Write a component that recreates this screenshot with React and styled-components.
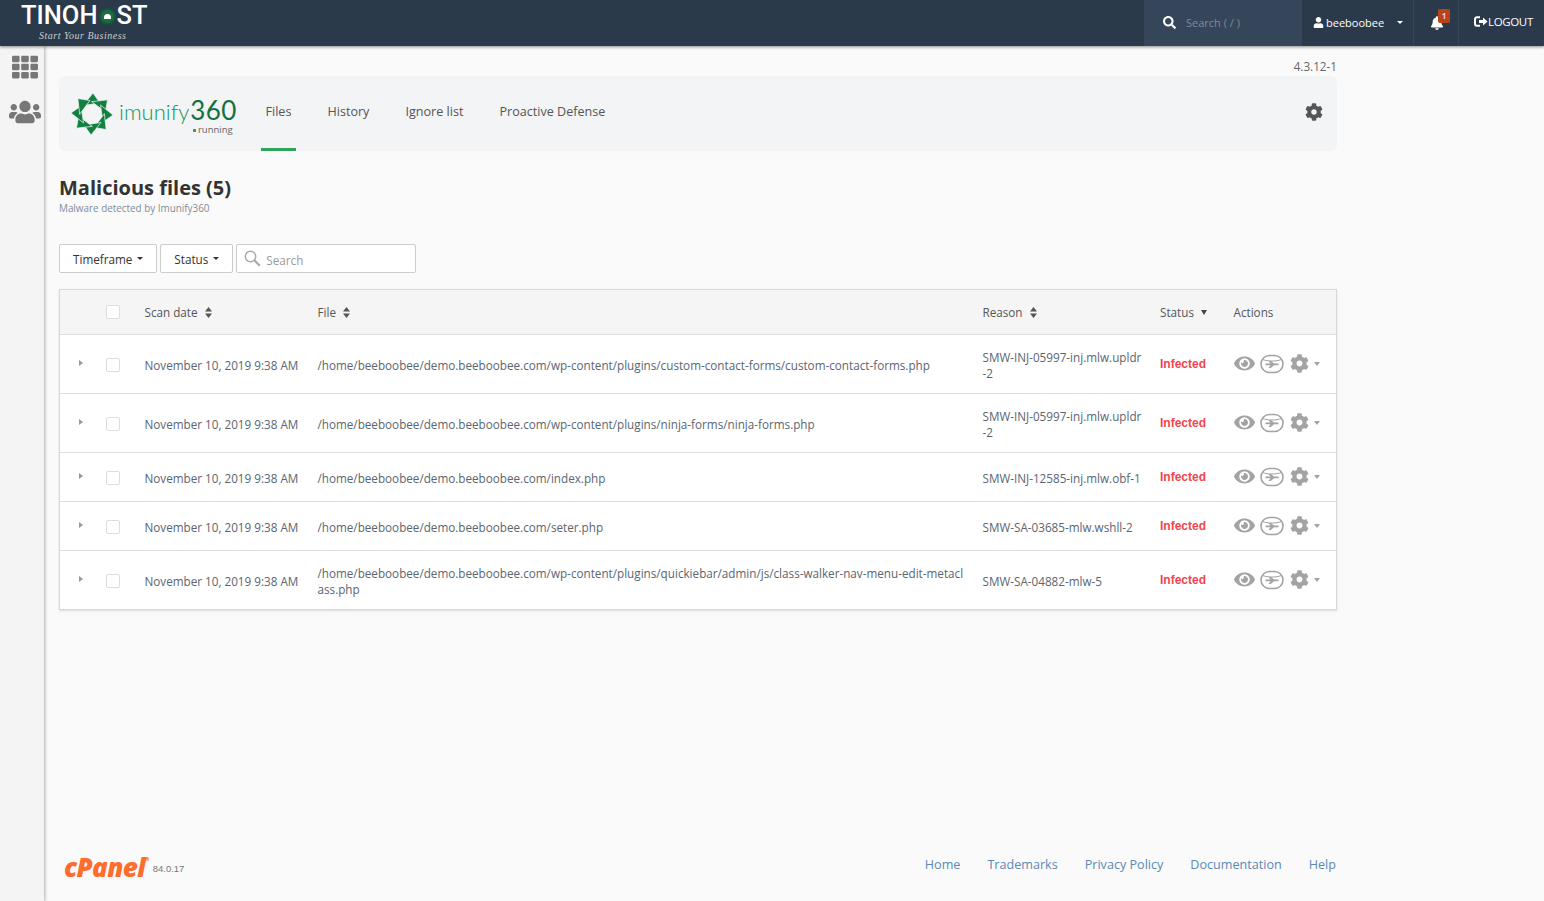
import styled, { createGlobalStyle } from "styled-components";
import { FaBell, FaCog, FaEye, FaSearch, FaTh, FaUser, FaUsers } from "react-icons/fa";

const rows = [
  {
    tall: true,
    file: "/home/beeboobee/demo.beeboobee.com/wp-content/plugins/custom-contact-forms/custom-contact-forms.php",
    reason: "SMW-INJ-05997-inj.mlw.upldr-2",
  },
  {
    tall: true,
    file: "/home/beeboobee/demo.beeboobee.com/wp-content/plugins/ninja-forms/ninja-forms.php",
    reason: "SMW-INJ-05997-inj.mlw.upldr-2",
  },
  {
    file: "/home/beeboobee/demo.beeboobee.com/index.php",
    reason: "SMW-INJ-12585-inj.mlw.obf-1",
  },
  {
    file: "/home/beeboobee/demo.beeboobee.com/seter.php",
    reason: "SMW-SA-03685-mlw.wshll-2",
  },
  {
    tall: true,
    file: "/home/beeboobee/demo.beeboobee.com/wp-content/plugins/quickiebar/admin/js/class-walker-nav-menu-edit-metaclass.php",
    reason: "SMW-SA-04882-mlw-5",
  },
];

const Global = createGlobalStyle`
  html, body { margin: 0; padding: 0; }
  body {
    background: #fafafa;
    font-family: "Open Sans", "Liberation Sans", sans-serif;
    color: #555;
  }
`;

function ImunifyMark() {
  const blades = [0, 45, 90, 135, 180, 225, 270, 315];
  return (
    <svg width="42" height="42" viewBox="-21 -21 42 42">
      {blades.map((a) => (
        <path
          key={a}
          transform={`rotate(${a})`}
          d="M1 -21 L-9 -8.5 L8 -11 Z"
          fill="#12813f"
          stroke="#f3f4f6"
          strokeWidth="0.7"
        />
      ))}
    </svg>
  );
}

function ProactiveIcon() {
  return (
    <svg width="24" height="20" viewBox="0 0 24 20">
      <rect x="1" y="1.5" width="22" height="17" rx="8.5" fill="none" stroke="#a3a3a3" strokeWidth="1.6" />
      <path d="M2.5 5.5 C8 7.5 16 7.5 21.5 5.5" fill="none" stroke="#a3a3a3" strokeWidth="1" />
      <path d="M5.5 9.4 H10.5 L8.5 7 H10.8 L14 9.4 H18.5 V11.2 H14 L10.8 14 H8.5 L10.5 11.2 H5.5 Z" fill="#a3a3a3" />
    </svg>
  );
}

function LogoutIcon() {
  return (
    <svg width="14" height="11" viewBox="0 0 14 11">
      <path d="M6 1.2 H3 A2 2 0 0 0 1 3.2 V7.8 A2 2 0 0 0 3 9.8 H6" fill="none" stroke="#fff" strokeWidth="2" />
      <path d="M5 4 H9 V1.6 L13.6 5.5 L9 9.4 V7 H5 Z" fill="#fff" />
    </svg>
  );
}

function SortArrows() {
  return (
    <svg width="7" height="11" viewBox="0 0 7 11">
      <path d="M3.5 0 L7 4.4 H0 Z M3.5 11 L0 6.6 H7 Z" fill="#555" />
    </svg>
  );
}

function ThinSearch() {
  return (
    <svg width="17" height="17" viewBox="0 0 17 17">
      <circle cx="6.5" cy="6.5" r="5.2" fill="none" stroke="#a9a9a9" strokeWidth="1.5" />
      <path d="M10.3 10.3 L15.8 15.8" stroke="#a9a9a9" strokeWidth="2.2" />
    </svg>
  );
}

export default function App() {
  return (
    <Page>
      <Global />
      <TopBar>
        <Brand>
          <BrandName>
            TINOH<BrandDot><i /></BrandDot>ST
          </BrandName>
          <BrandTag>Start Your Business</BrandTag>
        </Brand>
        <TopActions>
          <TopSearch>
            <FaSearch size={13} color="#fff" />
            <span>Search ( / )</span>
          </TopSearch>
          <UserCell>
            <FaUser size={11} />
            <span>beeboobee</span>
            <Caret $color="#fff" />
          </UserCell>
          <BellCell>
            <FaBell size={14} />
            <Badge>1</Badge>
          </BellCell>
          <LogoutCell>
            <LogoutIcon />
            <span>LOGOUT</span>
          </LogoutCell>
        </TopActions>
      </TopBar>
      <Body>
        <Side>
          <FaTh size={26} color="#777" />
          <FaUsers size={32} color="#777" />
        </Side>
        <Main>
          <Version>4.3.12-1</Version>
          <NavPanel>
            <Logo>
              <ImunifyMark />
              <LogoText>
                <LogoWord>
                  imunify<b>360</b>
                </LogoWord>
                <LogoState><i />running</LogoState>
              </LogoText>
            </Logo>
            <Tabs>
              <Tab $active>Files</Tab>
              <Tab>History</Tab>
              <Tab>Ignore list</Tab>
              <Tab>Proactive Defense</Tab>
            </Tabs>
            <SettingsGear><FaCog size={18} /></SettingsGear>
          </NavPanel>
          <Title>Malicious files (5)</Title>
          <Subtitle>Malware detected by Imunify360</Subtitle>
          <Filters>
            <FilterButton>Timeframe<Caret $color="#333" /></FilterButton>
            <FilterButton>Status<Caret $color="#333" /></FilterButton>
            <SearchBox>
              <ThinSearch />
              <span>Search</span>
            </SearchBox>
          </Filters>
          <Table>
            <HeadRow>
              <span />
              <CheckCell><Check /></CheckCell>
              <HeadCell>Scan date <SortArrows /></HeadCell>
              <HeadCell>File <SortArrows /></HeadCell>
              <HeadCell>Reason <SortArrows /></HeadCell>
              <HeadCell>Status <DownTri /></HeadCell>
              <HeadCell>Actions</HeadCell>
            </HeadRow>
            {rows.map((r) => (
              <Row key={r.file} $tall={r.tall}>
                <Expander><i /></Expander>
                <CheckCell><Check /></CheckCell>
                <Cell>November 10, 2019 9:38 AM</Cell>
                <FileCell>{r.file}</FileCell>
                <ReasonCell>{r.reason}</ReasonCell>
                <StatusCell>Infected</StatusCell>
                <ActionsCell>
                  <FaEye size={21} />
                  <ProactiveIcon />
                  <GearIcon><FaCog size={19} /></GearIcon>
                  <SmallCaret />
                </ActionsCell>
              </Row>
            ))}
          </Table>
          <Footer>
            <CpanelBlock>
              <CpanelLogo>cPanel<sup>®</sup></CpanelLogo>
              <CpanelVersion>84.0.17</CpanelVersion>
            </CpanelBlock>
            <FooterLinks>
              <a>Home</a>
              <a>Trademarks</a>
              <a>Privacy Policy</a>
              <a>Documentation</a>
              <a>Help</a>
            </FooterLinks>
          </Footer>
        </Main>
      </Body>
    </Page>
  );
}

const Page = styled.div`
  height: 901px;
  display: flex;
  flex-direction: column;
  overflow: hidden;
`;

const TopBar = styled.header`
  height: 46px;
  flex: none;
  background: #2b3a4a;
  box-shadow: 0 1px 3px rgba(0, 0, 0, 0.45);
  display: flex;
  justify-content: space-between;
  position: relative;
  z-index: 2;
`;

const Brand = styled.div`
  padding: 1px 0 0 21px;
  color: #fff;
`;

const BrandName = styled.div`
  display: flex;
  align-items: center;
  height: 29px;
  font: 500 25.5px/29px "Roboto", "Liberation Sans", sans-serif;
`;

const BrandDot = styled.span`
  width: 13px;
  height: 13px;
  margin: 1px 1px 0;
  border-radius: 50%;
  background: #1e6b45;
  border: 2px solid #17563a;
  display: flex;
  align-items: center;
  justify-content: center;

  i {
    width: 7px;
    height: 5px;
    border-radius: 4px 4px 0 0;
    background: #fff;
  }
`;

const BrandTag = styled.div`
  margin: 0 0 0 18px;
  font: italic 400 10px/11px "Liberation Serif", serif;
  color: #c7ccd1;
  letter-spacing: 0.5px;
`;

const TopActions = styled.div`
  display: flex;
  color: #fff;
  font-size: 11px;
`;

const TopCell = styled.div`
  display: flex;
  align-items: center;
  height: 46px;
  box-sizing: border-box;
  border-left: 1px solid #36475a;
`;

const TopSearch = styled(TopCell)`
  width: 157px;
  padding: 0 0 2px 18px;
  gap: 10px;
  background: #35465a;

  span {
    color: #7f8a96;
    font-size: 11px;
  }
`;

const UserCell = styled(TopCell)`
  width: 112px;
  padding: 0 0 1px 11px;
  gap: 2px;

  span {
    margin-right: 6px;
  }
`;

const BellCell = styled(TopCell)`
  width: 45px;
  padding-left: 16px;
  position: relative;
`;

const Badge = styled.span`
  position: absolute;
  top: 9px;
  left: 24px;
  width: 12px;
  height: 14px;
  border-radius: 2px;
  background: #b8431b;
  color: #e8d3c8;
  font-size: 8px;
  font-weight: 700;
  line-height: 14px;
  text-align: center;
`;

const LogoutCell = styled(TopCell)`
  width: 86px;
  padding: 0 0 3px 15px;
  gap: 0;
  font-size: 11.5px;
  letter-spacing: -0.35px;
`;

const Caret = styled.i`
  display: inline-block;
  width: 0;
  height: 0;
  margin-left: 5px;
  border-top: 3px solid ${(p) => p.$color};
  border-left: 3px solid transparent;
  border-right: 3px solid transparent;
`;

const Body = styled.div`
  flex: 1;
  display: flex;
  min-height: 0;
`;

const Side = styled.nav`
  width: 44px;
  flex: none;
  box-sizing: border-box;
  background: #f4f4f4;
  box-shadow: 1px 0 3px rgba(0, 0, 0, 0.3);
  padding: 8px 0 0 6px;
  display: flex;
  flex-direction: column;
  align-items: center;
  gap: 16px;
  position: relative;
`;

const Main = styled.main`
  width: 1278px;
  margin-left: 15px;
  display: flex;
  flex-direction: column;
`;

const Version = styled.div`
  height: 30px;
  box-sizing: border-box;
  padding: 12px 0 0 0;
  text-align: right;
  font-size: 11.7px;
  line-height: 16px;
  color: #666;
`;

const NavPanel = styled.div`
  height: 75px;
  flex: none;
  background: #f3f4f6;
  border-radius: 6px;
  display: flex;
  align-items: stretch;
  padding: 0 14px 0 12px;
`;

const Logo = styled.div`
  width: 190px;
  display: flex;
  align-items: center;
  gap: 6px;
`;

const LogoText = styled.div`
  display: flex;
  flex-direction: column;
  align-items: flex-end;
  margin-top: 5px;
`;

const LogoWord = styled.div`
  display: flex;
  align-items: baseline;
  font: 300 22px/24px "Lato", "Open Sans", sans-serif;
  color: #0f9a52;

  b {
    font-weight: 400;
    color: #12713f;
    font-size: 26px;
    margin-left: 1px;
    letter-spacing: 0.4px;
  }
`;

const LogoState = styled.div`
  font-size: 9.5px;
  line-height: 11px;
  color: #666;
  padding-right: 4px;

  i {
    display: inline-block;
    width: 3px;
    height: 3px;
    margin: 0 2px 1px 0;
    background: #2ea35c;
  }
`;

const Tabs = styled.div`
  display: flex;
  flex: 1;
`;

const Tab = styled.div`
  margin-right: 27px;
  padding: 0 4.5px 2px;
  display: flex;
  align-items: center;
  height: 75px;
  box-sizing: border-box;
  font-size: 12.6px;
  color: #555;
  border-bottom: 3px solid ${(p) => (p.$active ? "#2ea35c" : "transparent")};
`;

const SettingsGear = styled.div`
  display: flex;
  align-items: center;
  color: #555;
  padding-bottom: 4px;
`;

const Title = styled.h1`
  margin: 25px 0 0;
  font-size: 20px;
  line-height: 24px;
  font-weight: 700;
  color: #333;
`;

const Subtitle = styled.div`
  margin-top: 2px;
  font-size: 9.9px;
  line-height: 13px;
  color: #7f8c99;
`;

const Filters = styled.div`
  margin-top: 29px;
  display: flex;
  gap: 3px;
`;

const FilterButton = styled.div`
  height: 29px;
  box-sizing: border-box;
  padding: 0 13px;
  display: flex;
  align-items: center;
  background: #fff;
  border: 1px solid #ccc;
  border-radius: 2px;
  font-size: 11.7px;
  color: #333;
`;

const SearchBox = styled.div`
  width: 180px;
  height: 29px;
  box-sizing: border-box;
  padding: 2px 0 0 7px;
  display: flex;
  align-items: center;
  gap: 5px;
  background: #fff;
  border: 1px solid #ccc;
  border-radius: 2px;
  font-size: 11.7px;
  color: #999;

  svg {
    margin-top: -2px;
  }
`;

const Table = styled.div`
  margin-top: 16px;
  background: #fff;
  border: 1px solid #d9d9d9;
  box-shadow: 0 1px 2px rgba(0, 0, 0, 0.12);
`;

const columns = "36px 48.5px 173px 665px 177.5px 73.5px 1fr";

const HeadRow = styled.div`
  height: 44px;
  display: grid;
  grid-template-columns: ${columns};
  align-items: center;
  background: #f5f5f5;
`;

const HeadCell = styled.div`
  display: flex;
  align-items: center;
  gap: 7px;
  font-size: 11.7px;
  color: #555;
`;

const DownTri = styled.i`
  width: 0;
  height: 0;
  border-top: 5px solid #444;
  border-left: 3px solid transparent;
  border-right: 3px solid transparent;
`;

const Row = styled.div`
  height: ${(p) => (p.$tall ? "58px" : "48px")};
  box-sizing: content-box;
  display: grid;
  grid-template-columns: ${columns};
  align-items: center;
  border-top: 1px solid #ddd;

  & > * {
    position: relative;
    top: 1px;
  }
`;

const Expander = styled.div`
  padding-left: 19px;
  display: flex;
  margin-top: -4px;

  i {
    border-left: 4px solid #999;
    border-top: 3px solid transparent;
    border-bottom: 3px solid transparent;
  }
`;

const CheckCell = styled.div`
  padding-left: 10px;
  display: flex;
`;

const Check = styled.span`
  width: 14px;
  height: 14px;
  box-sizing: border-box;
  background: #fff;
  border: 1px solid #ddd;
  border-radius: 2px;
`;

const Cell = styled.div`
  font-size: 11.7px;
  line-height: 16px;
  color: #5a6570;
`;

const FileCell = styled(Cell)`
  padding-right: 17px;
  word-break: break-all;
`;

const ReasonCell = styled(Cell)`
  padding-right: 18px;
  word-break: break-all;
`;

const StatusCell = styled.div`
  font: 700 12px/16px "Liberation Sans", Arial, sans-serif;
  color: #f2454d;
  margin-top: -2px;
`;

const ActionsCell = styled.div`
  display: flex;
  align-items: center;
  gap: 5px;
  color: #a3a3a3;
  margin-top: -3px;
`;

const GearIcon = styled.span`
  display: flex;
  margin-left: 1px;
`;

const SmallCaret = styled.i`
  width: 0;
  height: 0;
  border-top: 4px solid #a3a3a3;
  border-left: 3px solid transparent;
  border-right: 3px solid transparent;
`;

const Footer = styled.footer`
  margin-top: auto;
  height: 44px;
  display: flex;
  justify-content: space-between;
  align-items: flex-start;
  padding: 0 1px 0 5px;
`;

const CpanelBlock = styled.div`
  display: flex;
  align-items: center;
  gap: 4px;
  margin-top: -6px;
`;

const CpanelLogo = styled.div`
  font: italic 800 26px/30px "Open Sans", sans-serif;
  color: #ff6c2c;
  letter-spacing: -0.6px;

  sup {
    font-size: 5px;
    font-style: normal;
    vertical-align: 16px;
    line-height: 0;
  }
`;

const CpanelVersion = styled.span`
  font: 400 9.5px/26px "Liberation Sans", sans-serif;
  color: #777;
  margin-top: 5px;
`;

const FooterLinks = styled.div`
  display: flex;
  gap: 27px;
  font-size: 12.6px;
  line-height: 16px;
  color: #5b88b5;
`;
